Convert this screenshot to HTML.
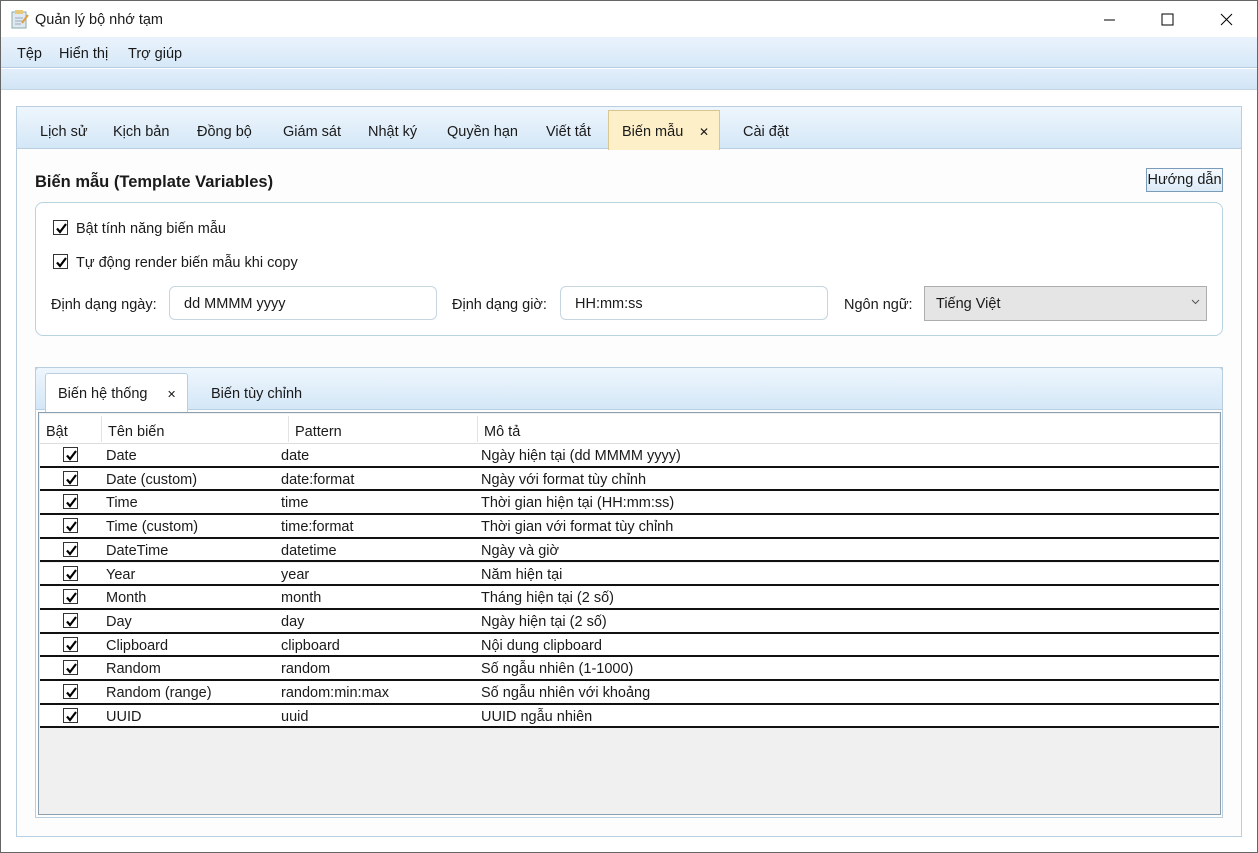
<!DOCTYPE html>
<html><head><meta charset="utf-8"><style>
*{margin:0;padding:0;box-sizing:border-box}
body{width:1258px;height:853px;overflow:hidden;background:#fff;font-family:"Liberation Sans","Noto Sans CJK JP",sans-serif;font-size:14.5px;color:#1a1a1a;position:relative;border:1px solid #666}
.a{position:absolute;white-space:nowrap}
.cb{position:absolute;width:15px;height:15px;border:1px solid #333;background:#fff}
.cb svg{position:absolute;left:1px;top:1px}
.row{position:absolute;left:40px;width:1179px;height:23.7px;border-bottom:2px solid #111;background:#fff}
.row span{position:absolute;top:4px}
</style></head><body>
<div class="a" style="left:0;top:0;width:1256px;height:37px;background:#fff"></div>
<svg class="a" style="left:10px;top:8px" width="18" height="20"><rect x="1" y="3" width="14" height="16" fill="#dfe9f3" stroke="#8aa"/><rect x="4" y="1" width="8" height="4" fill="#e8c87a"/><path d="M4 9h8M4 12h8M4 15h6" stroke="#9ab" /><path d="M11 14l6-8" stroke="#e0a040" stroke-width="2"/></svg>
<div class="a" style="left:34px;top:11px;font-size:14.5px">Quản lý bộ nhớ tạm</div>
<svg class="a" style="left:1099px;top:10px" width="140" height="18"><path d="M4 9h11" stroke="#000"/><rect x="62" y="3" width="11" height="11" fill="none" stroke="#000"/><path d="M121 3l11 11M132 3l-11 11" stroke="#000"/></svg>
<div class="a" style="left:0;top:36px;width:1256px;height:31px;background:linear-gradient(#eaf3fc,#d6e8f8);border-bottom:1px solid #b7cde0"></div>
<div class="a" style="left:16px;top:45px">Tệp</div>
<div class="a" style="left:58px;top:45px">Hiển thị</div>
<div class="a" style="left:127px;top:45px">Trợ giúp</div>
<div class="a" style="left:0;top:68px;width:1256px;height:21px;background:linear-gradient(#e2eefa,#d2e5f6);border-bottom:1px solid #c4d6e4"></div>
<div class="a" style="left:15px;top:105px;width:1226px;height:731px;border:1px solid #b9cfe0;background:#fdfdfd"></div>
<div class="a" style="left:15px;top:105px;width:1226px;height:43px;background:linear-gradient(#eef6fd,#d4e7f7);border:1px solid #b9cfe0"></div>
<div class="a" style="left:607px;top:109px;width:112px;height:40px;background:#fdefc8;border:1px solid #d9c590;border-bottom:none"></div>
<div class="a" style="left:39px;top:123px">Lịch sử</div>
<div class="a" style="left:112px;top:123px">Kịch bản</div>
<div class="a" style="left:196px;top:123px">Đồng bộ</div>
<div class="a" style="left:282px;top:123px">Giám sát</div>
<div class="a" style="left:367px;top:123px">Nhật ký</div>
<div class="a" style="left:446px;top:123px">Quyền hạn</div>
<div class="a" style="left:545px;top:123px">Viết tắt</div>
<div class="a" style="left:621px;top:123px">Biến mẫu</div>
<div class="a" style="left:698px;top:124px;font-size:12px">✕</div>
<div class="a" style="left:742px;top:123px">Cài đặt</div>
<div class="a" style="left:34px;top:172px;font-weight:bold;font-size:16.5px">Biến mẫu (Template Variables)</div>
<div class="a" style="left:1145px;top:167px;width:77px;height:24px;border:1px solid #7a9cb8;background:linear-gradient(#f4f9fe,#dcebf8);text-align:center;line-height:23px">Hướng dẫn</div>
<div class="a" style="left:34px;top:201px;width:1188px;height:134px;border:1px solid #b9d3e0;border-radius:8px;background:#fff"></div>
<div class="cb" style="left:52px;top:219px"><svg width="13" height="13"><path d="M2 6.5l3 3.5 6-8" stroke="#000" stroke-width="2.2" fill="none"/></svg></div>
<div class="a" style="left:75px;top:220px">Bật tính năng biến mẫu</div>
<div class="cb" style="left:52px;top:253px"><svg width="13" height="13"><path d="M2 6.5l3 3.5 6-8" stroke="#000" stroke-width="2.2" fill="none"/></svg></div>
<div class="a" style="left:75px;top:254px">Tự động render biến mẫu khi copy</div>
<div class="a" style="left:50px;top:296px">Định dạng ngày:</div>
<div class="a" style="left:168px;top:285px;width:268px;height:34px;border:1px solid #c6d6e0;border-radius:6px;padding:9px 14px">dd MMMM yyyy</div>
<div class="a" style="left:451px;top:296px">Định dạng giờ:</div>
<div class="a" style="left:559px;top:285px;width:268px;height:34px;border:1px solid #c6d6e0;border-radius:6px;padding:9px 14px">HH:mm:ss</div>
<div class="a" style="left:843px;top:296px">Ngôn ngữ:</div>
<div class="a" style="left:923px;top:285px;width:283px;height:35px;border:1px solid #adadad;background:#e5e5e5;padding:9px 11px">Tiếng Việt</div>
<svg class="a" style="left:1190px;top:298px" width="9" height="6"><path d="M1 1l3.5 3.5L8 1" stroke="#555" fill="none"/></svg>
<div class="a" style="left:34px;top:366px;width:1188px;height:451px;border:1px solid #b9cfe0;background:#fdfdfd"></div>
<div class="a" style="left:34px;top:366px;width:1188px;height:43px;background:linear-gradient(#eef6fd,#d4e7f7);border:1px solid #b9cfe0;border-radius:4px 4px 0 0"></div>
<div class="a" style="left:44px;top:372px;width:143px;height:39px;background:#fff;border:1px solid #b9cfe0;border-bottom:none;border-radius:3px 3px 0 0"></div>
<div class="a" style="left:57px;top:385px">Biến hệ thống</div>
<div class="a" style="left:166px;top:387px;font-size:11px">✕</div>
<div class="a" style="left:210px;top:385px">Biến tùy chỉnh</div>
<div class="a" style="left:37px;top:411px;width:1183px;height:403px;border:1px solid #8aa0b0;background:#f0f0f0"></div>
<div class="a" style="left:39px;top:413px;width:1179px;height:30px;background:#fff;border-bottom:1px solid #ddd"></div>
<div class="a" style="left:100px;top:415px;height:26px;border-left:1px solid #e3e3e3"></div>
<div class="a" style="left:287px;top:415px;height:26px;border-left:1px solid #e3e3e3"></div>
<div class="a" style="left:476px;top:415px;height:26px;border-left:1px solid #e3e3e3"></div>
<div class="a" style="left:45px;top:423px">Bật</div>
<div class="a" style="left:107px;top:423px">Tên biến</div>
<div class="a" style="left:294px;top:423px">Pattern</div>
<div class="a" style="left:483px;top:423px">Mô tả</div>
<div id="rows"></div>
<script>
var d=[["Date","date","Ngày hiện tại (dd MMMM yyyy)"],["Date (custom)","date:format","Ngày với format tùy chỉnh"],["Time","time","Thời gian hiện tại (HH:mm:ss)"],["Time (custom)","time:format","Thời gian với format tùy chỉnh"],["DateTime","datetime","Ngày và giờ"],["Year","year","Năm hiện tại"],["Month","month","Tháng hiện tại (2 số)"],["Day","day","Ngày hiện tại (2 số)"],["Clipboard","clipboard","Nội dung clipboard"],["Random","random","Số ngẫu nhiên (1-1000)"],["Random (range)","random:min:max","Số ngẫu nhiên với khoảng"],["UUID","uuid","UUID ngẫu nhiên"]];
var h="";d.forEach(function(r,i){var t=443+i*23.7;h+='<div class="row" style="left:39px;top:'+t+'px"><div class="cb" style="left:23px;top:3px"><svg width="13" height="13"><path d="M2 6.5l3 3.5 6-8" stroke="#000" stroke-width="2.2" fill="none"/></svg></div><span style="left:66px">'+r[0]+'</span><span style="left:241px">'+r[1]+'</span><span style="left:441px">'+r[2]+'</span></div>';});
document.getElementById("rows").innerHTML=h;
</script>
</body></html>
